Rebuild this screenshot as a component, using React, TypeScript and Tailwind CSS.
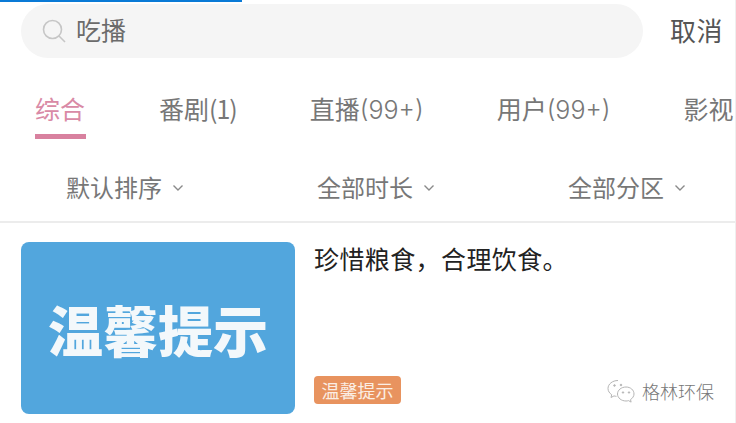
const cjk = "font-['Noto_Sans_CJK_SC','Noto_Sans',sans-serif]";

const tabs = [
  { label: "综合", active: true },
  { label: "番剧", count: "(1)", countClass: "tracking-[-1px]" },
  { label: "直播", count: "(99+)", countClass: "font-['Inter'] font-light" },
  { label: "用户", count: "(99+)", countClass: "font-['Inter'] font-light" },
  { label: "影视" },
];

const filters = ["默认排序", "全部时长", "全部分区"];

function Chevron() {
  return (
    <svg viewBox="0 0 12 8" fill="none" stroke="#8a8a8a" strokeWidth="1.4" className="ml-[10px] mt-[2px] h-[8px] w-[12px] shrink-0">
      <path d="M1.5 1.500 6 6l4.500-4.500" />
    </svg>
  );
}

export default function App() {
  return (
    <div className={`relative h-[423px] w-[736px] overflow-hidden border-r border-[#efefef] bg-white ${cjk}`}>
      {/* top edge leftover */}
      <div className="h-[2px] w-[242px] bg-[#0a7ad6]" />

      {/* Search row */}
      <div className="mt-[2px] flex h-[54px] items-center pl-[21px]">
        <div className="flex h-[54px] w-[622px] items-center rounded-[27px] bg-[#f5f5f5] pl-[21px]">
          <svg viewBox="0 0 24 24" fill="none" stroke="#c6c6c6" strokeWidth="1.6" className="h-[24px] w-[24px] shrink-0">
            <circle cx="10.500" cy="10.500" r="9" />
            <path d="m17 17 6 6" />
          </svg>
          <span className="mb-[3px] ml-[10px] text-[25px] leading-none text-[#6b6b6b]">吃播</span>
        </div>
        <span className="mb-[3px] ml-[27px] text-[26px] leading-none tracking-[0.5px] text-[#555]">取消</span>
      </div>

      {/* Tabs */}
      <div className="mt-[33px] flex h-[52px] gap-[73px] whitespace-nowrap pl-[35px]">
        {tabs.map((tab) => (
          <div key={tab.label} className="flex shrink-0 flex-col">
            <span className={`text-[25px] leading-[34px] ${tab.active ? "text-[#d98aa6]" : "text-[#777]"}`}>
              {tab.label}
              {tab.count && <span className={tab.countClass}>{tab.count}</span>}
            </span>
            {tab.active && <div className="mt-[9px] h-[5px] w-[51px] bg-[#d8819f]" />}
          </div>
        ))}
      </div>

      {/* Filters */}
      <div className="mt-[25px] flex h-[37px] items-center pl-[66px]">
        {filters.map((f) => (
          <div key={f} className="flex w-[251px] shrink-0 items-center">
            <span className="text-[24px] leading-none text-[#777]">{f}</span>
            <Chevron />
          </div>
        ))}
      </div>

      <div className="mt-[16px] h-[2px] bg-[#ececec]" />

      {/* Result card */}
      <div className="mt-[19px] flex pl-[21px]">
        <div className="flex h-[172px] w-[274px] items-center justify-center rounded-[8px] bg-[#52a6dd]">
          <span className="text-[55px] font-black leading-none text-[#f3f8fb]">温馨提示</span>
        </div>
        <div className="ml-[19px] flex h-[162px] flex-col justify-between">
          <span className="-mt-[2px] text-[25px] leading-[36px] tracking-[0.4px] text-[#222]">珍惜粮食，合理饮食。</span>
          <span className="flex h-[28px] w-[87px] items-center justify-center rounded-[4px] bg-[#e8935f] text-[18px] leading-none text-[#fbeee4]">
            温馨提示
          </span>
        </div>
      </div>

      {/* Watermark */}
      <div className="absolute left-[606px] top-[378px] flex items-center">
        <svg viewBox="0 0 30 26" fill="none" stroke="#b5b5b5" strokeWidth="1" className="h-[26px] w-[30px]">
          <path d="M12 2.500C6.500 2.500 2 6 2 10.500c0 2.600 1.500 4.700 3.700 6.200L5 19.500l3-1.600c.8.2 1.600.4 2.500.4" />
          <path d="M20 9c-4.600 0-8.500 3.100-8.500 7s3.900 7 8.500 7c.9 0 1.700-.1 2.500-.4l2.600 1.500-.6-2.500c2-1.300 3.500-3.400 3.500-5.600 0-3.900-3.400-7-8-7z" />
          <circle cx="8.500" cy="7.500" r=".8" fill="#b5b5b5" />
          <circle cx="15" cy="7" r=".8" fill="#b5b5b5" />
          <circle cx="17" cy="14.500" r=".7" fill="#b5b5b5" />
          <circle cx="23" cy="14.500" r=".7" fill="#b5b5b5" />
        </svg>
        <span className="ml-[6px] text-[18px] font-light leading-none text-[#777]">格林环保</span>
      </div>
    </div>
  );
}
